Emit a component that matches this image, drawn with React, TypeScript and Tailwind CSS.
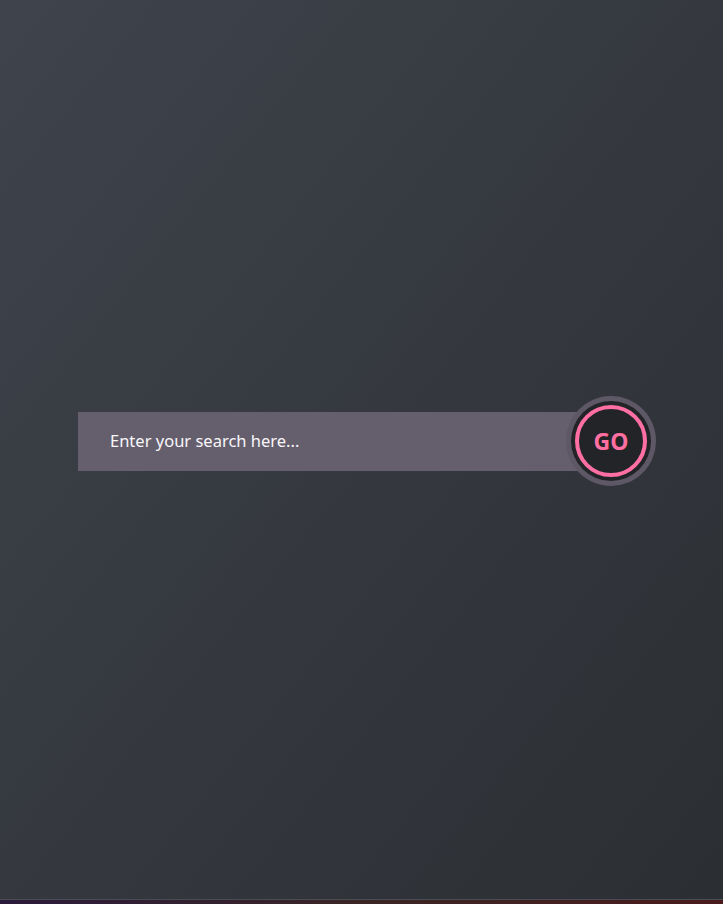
import React from "react";

export default function App() {
  return (
    <div className="w-full h-[904px] flex flex-col overflow-hidden" style={{ fontFamily: '"Noto Sans", "Open Sans", sans-serif' }}>
      <div className="h-[899px] w-full bg-gradient-to-br from-[#3f434c] to-[#2b2e32] flex flex-col">
        <div className="pt-[396px] pl-[78px] flex items-center">
          <div className="w-[510px] h-[59px] bg-[#655f6d] flex items-center pl-[32px] -mr-[22px]">
            <span className="text-[16.5px] text-[#f8f6fa] leading-none">Enter your search here...</span>
          </div>
          <div className="relative w-[90px] h-[90px] rounded-full bg-[#5e5866] p-[5px] shrink-0">
            <div className="w-full h-full rounded-full bg-[#222428] p-[4px]">
              <div className="w-full h-full rounded-full border-[4px] border-[#ff6fa2] flex items-center justify-center">
                <span className="text-[23px] font-bold text-[#ff6fa2] leading-none">GO</span>
              </div>
            </div>
          </div>
        </div>
      </div>
      <div className="h-px w-full bg-[#4a4d55]" />
      <div className="h-[4px] w-full bg-gradient-to-r from-[#2a1a3a] via-[#3a2424] to-[#4a1a1c]" />
    </div>
  );
}
